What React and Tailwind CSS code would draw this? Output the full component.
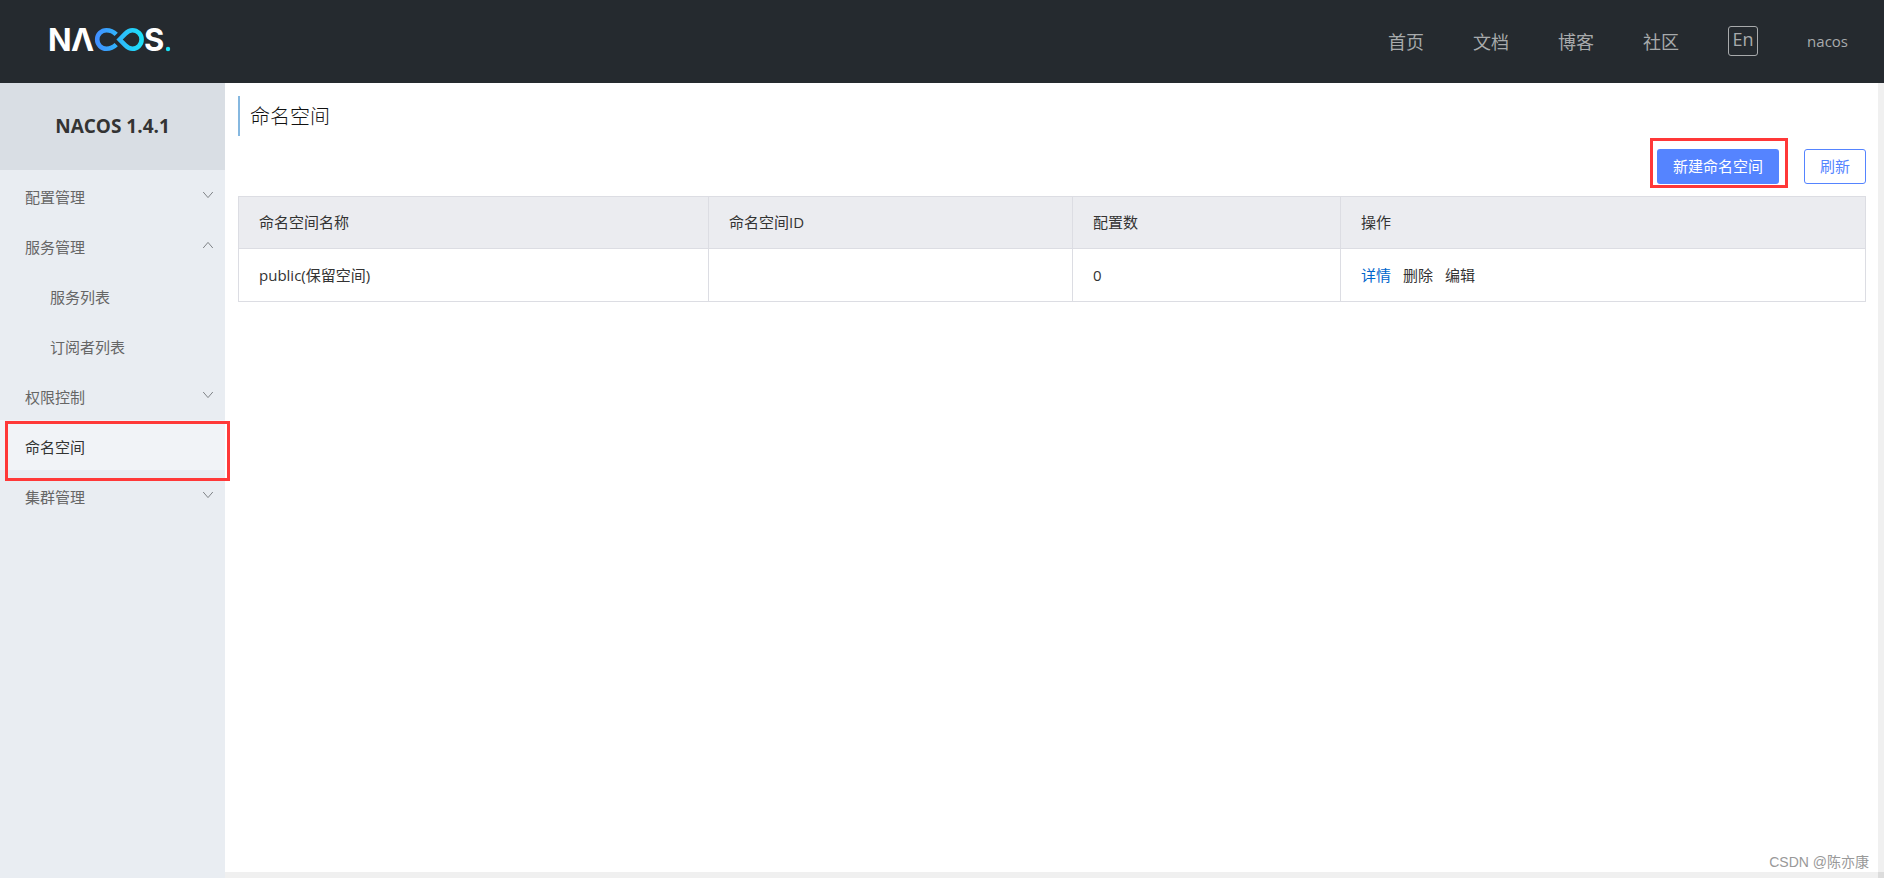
import { useState } from "react";
import clsx from "clsx";

const navLinks = ["首页", "文档", "博客", "社区"];

const menu = [
  { label: "配置管理", children: ["配置列表", "历史版本"] },
  { label: "服务管理", children: ["服务列表", "订阅者列表"] },
  { label: "权限控制", children: ["用户列表", "角色管理"] },
  { label: "命名空间" },
  { label: "集群管理", children: ["节点列表"] },
];

const namespaces = [{ name: "public(保留空间)", id: "", count: 0 }];

function Logo() {
  return (
    <svg width="132" height="46" viewBox="-6 -10 132 46" role="img" aria-label="NACOS.">
      <defs>
        <linearGradient id="loop" gradientUnits="userSpaceOnUse" x1="44" y1="0" x2="95" y2="0">
          <stop offset="0" stopColor="#4489ff" />
          <stop offset="1" stopColor="#1be3f8" />
        </linearGradient>
      </defs>
      <g fill="#fff" fontFamily="Inter, sans-serif" fontSize="31" fontWeight="700">
        <text x="-1" y="24">N</text>
        <text x="22" y="24">Λ</text>
        <text x="95" y="24">S</text>
      </g>
      <g fill="none" stroke="url(#loop)" strokeWidth="4.6">
        <path d="M67.2 7.4 C63.6 3.8 60.6 3.3 57.4 3.3 A9.2 9.2 0 0 0 57.4 21.7 C60.6 21.7 63.6 21.2 67.2 17.6" />
        <path d="M70.6 12.5 L76.4 6.6 C78.8 4.2 80.8 3.3 83.4 3.3 A9.2 9.2 0 0 1 83.4 21.7 C80.8 21.7 78.8 20.8 76.4 18.4 Z" />
      </g>
      <circle cx="119" cy="22" r="2.2" fill="#1be3f8" />
    </svg>
  );
}

function Chevron({ open }) {
  return (
    <svg
      width="12"
      height="8"
      viewBox="0 0 12 8"
      fill="none"
      stroke="#808488"
      className={clsx(open && "rotate-180")}
    >
      <path d="M1.2 1 L6 6.6 L10.8 1" />
    </svg>
  );
}

function Header() {
  return (
    <header className="flex h-[83px] shrink-0 items-center justify-between bg-[#252a2f] pr-9 pl-[43px]">
      <a href="#home" className="-mt-1">
        <Logo />
      </a>
      <nav className="flex items-center gap-[49px] text-lg text-[#a8aaac]">
        {navLinks.map((label) => (
          <a key={label} href={`#${label}`}>
            {label}
          </a>
        ))}
        <button
          type="button"
          className="mb-0.5 h-[30px] w-[30px] rounded-[3px] border border-[#a8aaac] pb-1 leading-6"
        >
          En
        </button>
        <a href="#user" className="text-[15px]">
          nacos
        </a>
      </nav>
    </header>
  );
}

function Sidebar() {
  const [open, setOpen] = useState(["服务管理"]);

  function toggle(label) {
    setOpen((current) =>
      current.includes(label)
        ? current.filter((item) => item !== label)
        : [...current, label],
    );
  }

  return (
    <aside className="w-[225px] shrink-0 bg-[#e9edf2] text-[15px] text-[#666]">
      <h1 className="h-[87px] bg-[#d9dee4] text-center text-[19px] leading-[87px] font-bold text-[#333]">
        NACOS 1.4.1
      </h1>
      <ul>
        {menu.map(({ label, children }) =>
          children ? (
            <li key={label}>
              <button
                type="button"
                aria-expanded={open.includes(label)}
                onClick={() => toggle(label)}
                className="flex h-[50px] w-full items-center justify-between pr-[11px] pl-[25px]"
              >
                <span className="pt-1">{label}</span>
                <Chevron open={open.includes(label)} />
              </button>
              {open.includes(label) && (
                <ul>
                  {children.map((child) => (
                    <li key={child}>
                      <a
                        href={`#${child}`}
                        className="flex h-[50px] items-center pt-1 pl-[50px]"
                      >
                        {child}
                      </a>
                    </li>
                  ))}
                </ul>
              )}
            </li>
          ) : (
            <li key={label} className="relative">
              <a
                href={`#${label}`}
                className="flex h-[50px] items-center bg-[#f1f3f7] pt-1 pl-[25px] text-[#333]"
              >
                {label}
              </a>
              <span className="pointer-events-none absolute top-px left-[5px] z-10 h-[60px] w-[225px] border-3 border-[#ff3838]" />
            </li>
          ),
        )}
      </ul>
    </aside>
  );
}

function NamespaceTable() {
  const cell = "border border-[#dcdde3] px-5 text-left font-normal";

  return (
    <table className="mt-3 w-full table-fixed border-collapse text-[15px] text-[#333]">
      <thead className="bg-[#ebecf0]">
        <tr className="h-[52px]">
          <th className={clsx(cell, "w-[470px]")}>命名空间名称</th>
          <th className={clsx(cell, "w-[364px]")}>命名空间ID</th>
          <th className={clsx(cell, "w-[268px]")}>配置数</th>
          <th className={cell}>操作</th>
        </tr>
      </thead>
      <tbody>
        {namespaces.map((item) => (
          <tr key={item.name} className="h-[53px]">
            <td className={cell}>{item.name}</td>
            <td className={cell}>{item.id}</td>
            <td className={cell}>{item.count}</td>
            <td className={cell}>
              <div className="flex gap-3">
                <a href="#detail" className="text-[#0066cc]">
                  详情
                </a>
                <a href="#delete">删除</a>
                <a href="#edit">编辑</a>
              </div>
            </td>
          </tr>
        ))}
      </tbody>
    </table>
  );
}

function App() {
  return (
    <div className="flex min-h-screen flex-col bg-white font-['Open_Sans','Noto_Sans_CJK_SC',sans-serif]">
      <Header />
      <div className="flex flex-1">
        <Sidebar />
        <div className="grid flex-1 grid-cols-[1fr_6px] grid-rows-[1fr_6px]">
          <main className="relative px-3 pt-[13px] pl-[13px]">
            <h2 className="h-10 border-l-2 border-[#86b8e0] pl-2.5 text-xl leading-[42px] font-light text-[#111]">
              命名空间
            </h2>
            <div className="mt-[13px] flex justify-end gap-[25px] text-[15px]">
              <div className="relative">
                <button
                  type="button"
                  className="h-[35px] rounded-[3px] bg-[#5584ff] px-4 text-white"
                >
                  新建命名空间
                </button>
                <span className="pointer-events-none absolute -top-[11px] -left-[7px] h-[50px] w-[138px] border-3 border-[#ff3838]" />
              </div>
              <button
                type="button"
                className="h-[35px] rounded-[3px] border border-[#5584ff] px-[15px] text-[#5584ff]"
              >
                刷新
              </button>
            </div>
            <NamespaceTable />
            <p className="absolute right-[9px] bottom-0 font-['Liberation_Sans','Noto_Sans_CJK_SC',sans-serif] text-sm text-[#999]">
              CSDN @陈亦康
            </p>
          </main>
          <div className="bg-[#f0f0f0]" />
          <div className="bg-[#f0f0f0]" />
          <div className="bg-[#dcdcdc]" />
        </div>
      </div>
    </div>
  );
}

export default App;
